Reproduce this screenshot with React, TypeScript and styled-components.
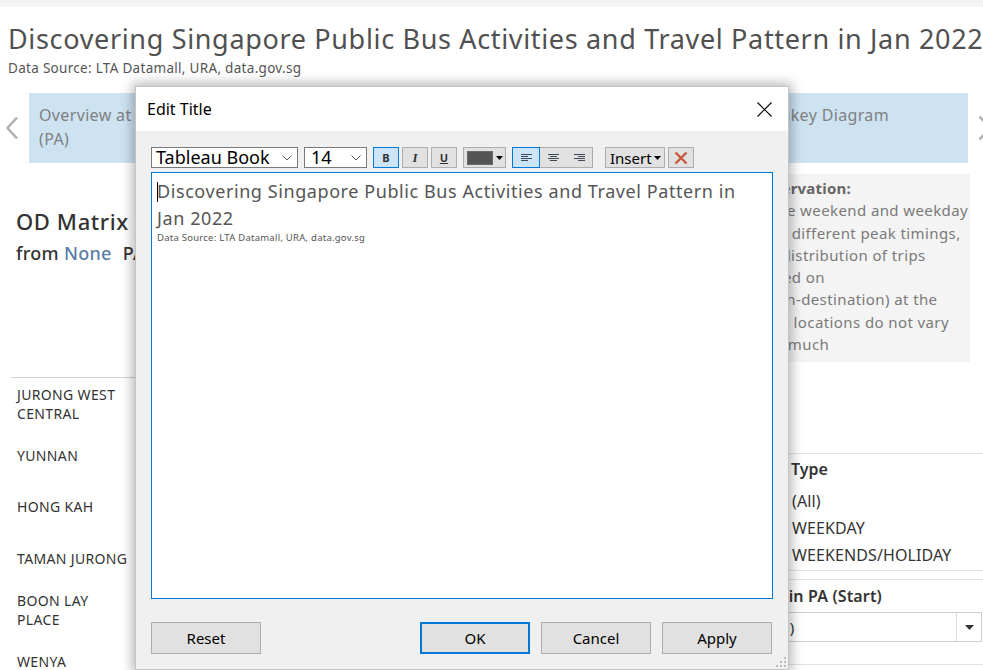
import React from "react";
import styled, { createGlobalStyle } from "styled-components";

const TAB = `"Noto Sans", "Open Sans", sans-serif`;
const WIN = `"Noto Sans", "Open Sans", sans-serif`;

const GlobalStyle = createGlobalStyle`
  * { box-sizing: border-box; }
  html, body { margin: 0; padding: 0; background: #ffffff; }
  body { overflow: hidden; font-family: ${TAB}; }
`;

const Page = styled.div`
  position: relative;
  width: 983px;
  height: 670px;
  overflow: hidden;
  background: #fff;
  font-family: ${TAB};
`;

const TopStrip = styled.div`
  height: 7px;
  background: #f3f3f3;
`;

const Header = styled.header`
  padding: 16px 0 0 8px;
`;

const Title = styled.h1`
  margin: 0;
  font-size: 27px;
  line-height: 32px;
  font-weight: 400;
  letter-spacing: 0.66px;
  color: #505050;
  white-space: nowrap;
`;

const Source = styled.div`
  margin-top: 5px;
  font-size: 13.5px;
  line-height: 16px;
  letter-spacing: 0.3px;
  color: #555;
`;

const StoryNav = styled.nav`
  margin-top: 17px;
  display: grid;
  grid-template-columns: 29px 939px 1fr;
  height: 70px;
`;

const NavArrow = styled.div<{ $side: "left" | "right" }>`
  display: flex;
  align-items: center;
  padding-left: ${(p) => (p.$side === "left" ? 5 : 10)}px;
`;

const StoryBar = styled.div`
  display: grid;
  grid-template-columns: repeat(3, 1fr) 216px;
  background: #cde3f2;
`;

const StoryPoint = styled.div`
  padding: 10px 10px 0;
  font-size: 16px;
  line-height: 24px;
  letter-spacing: 0.35px;
  color: #808080;
  overflow: hidden;
  white-space: nowrap;
`;

const Main = styled.main`
  display: grid;
  grid-template-columns: 150px 1fr 239px;
`;

const LeftCol = styled.section`
  padding-top: 44px;
  white-space: nowrap;
`;

const SheetTitle = styled.h2`
  margin: 0 0 0 16px;
  font-size: 22px;
  line-height: 28px;
  font-weight: 500;
  letter-spacing: 0.6px;
  color: #333;
`;

const SheetSub = styled.div`
  margin: 6px 0 0 16px;
  font-size: 18px;
  line-height: 24px;
  font-weight: 500;
  letter-spacing: 0.3px;
  color: #333;
`;

const Accent = styled.span`
  color: #5a7ea6;
  margin-right: 11px;
`;

const RowList = styled.div`
  margin: 112px 0 0 11px;
  width: 260px;
  border-top: 1px solid #d0d0d0;
`;

const RowLabel = styled.div`
  height: 51.5px;
  display: flex;
  align-items: center;
  padding-left: 6px;
  font-size: 14px;
  line-height: 19px;
  letter-spacing: 0.35px;
  color: #333;
  span {
    width: 114px;
    white-space: normal;
  }
`;

const RightCol = styled.aside`
  display: flex;
  flex-direction: column;
`;

const ObsBox = styled.div`
  margin: 11px 13px 0 0;
  height: 188px;
  background: #f4f4f4;
  padding: 3px 0 0 8px;
  font-size: 15px;
  line-height: 22.3px;
  letter-spacing: 0.4px;
  color: #7a7a7a;
  white-space: nowrap;
  overflow: hidden;
  b {
    font-weight: 700;
    color: #666;
    letter-spacing: 0.2px;
  }
`;

const Filter = styled.div<{ $top: number; $bottom: number }>`
  margin-top: ${(p) => p.$top}px;
  border-top: 1px solid #e3e3e3;
  border-bottom: 1px solid #e3e3e3;
  padding-bottom: ${(p) => p.$bottom}px;
`;

const FilterTitle = styled.div<{ $pad: number; $indent: number; $track: number }>`
  padding: ${(p) => p.$pad}px 0 0 ${(p) => p.$indent}px;
  font-size: 16px;
  line-height: 22px;
  font-weight: 600;
  letter-spacing: ${(p) => p.$track}px;
  color: #333;
  white-space: nowrap;
`;

const RadioList = styled.div`
  margin-top: 7px;
`;

const RadioItem = styled.div`
  height: 27px;
  display: flex;
  align-items: center;
  padding-left: 13px;
  font-size: 16px;
  letter-spacing: 0.1px;
  color: #333;
  white-space: nowrap;
`;

const Radio = styled.span<{ $on?: boolean }>`
  width: 13px;
  height: 13px;
  border-radius: 50%;
  border: 1px solid #999;
  margin-right: 22px;
  background: ${(p) => (p.$on ? "radial-gradient(#555 35%, #fff 40%)" : "#fff")};
`;

const Dropdown = styled.div`
  margin: 5px 1px 0 13px;
  height: 30px;
  border: 1px solid #cfcfcf;
  display: grid;
  grid-template-columns: 1fr 25px;
  font-size: 15px;
  color: #333;
`;

const DropValue = styled.div`
  display: flex;
  align-items: center;
  padding-left: 10px;
`;

const DropArrow = styled.div`
  border-left: 1px solid #dcdcdc;
  display: flex;
  align-items: center;
  justify-content: center;
`;

/* ---------- dialog ---------- */

const Dialog = styled.div`
  position: absolute;
  left: 135px;
  top: 86px;
  width: 654px;
  height: 584px;
  border: 1px solid #c4c4c4;
  background: #f0f0f0;
  box-shadow: 0 0 11px 3px rgba(0, 0, 0, 0.28);
  font-family: ${WIN};
  display: flex;
  flex-direction: column;
`;

const DialogHeader = styled.div`
  height: 44px;
  background: #fff;
  display: flex;
  align-items: center;
  justify-content: space-between;
  padding: 0 16px 0 11px;
`;

const DialogTitle = styled.div`
  font-size: 16px;
  line-height: 22px;
  color: #000;
`;

const CloseBtn = styled.div`
  width: 15px;
  height: 15px;
  display: flex;
`;

const DialogBody = styled.div`
  flex: 1;
  padding: 16px 15px 0 15px;
  display: flex;
  flex-direction: column;
  position: relative;
`;

const Toolbar = styled.div`
  display: flex;
  height: 21px;
`;

const SelectBox = styled.div<{ $w: number; $gap: number; $padLeft: number }>`
  width: ${(p) => p.$w}px;
  margin-left: ${(p) => p.$gap}px;
  display: flex;
  align-items: center;
  justify-content: space-between;
  background: #fff;
  border: 1px solid #7a7a7a;
  padding: 0 5px 0 ${(p) => p.$padLeft}px;
  font-size: 18px;
  line-height: 19px;
  color: #000;
  overflow: hidden;
  white-space: nowrap;
`;

const ToolBtn = styled.div<{ $w: number; $gap: number; $active?: boolean }>`
  width: ${(p) => p.$w}px;
  margin-left: ${(p) => p.$gap}px;
  display: flex;
  align-items: center;
  justify-content: center;
  background: ${(p) => (p.$active ? "#cce4f7" : "#e1e1e1")};
  border: 1px solid ${(p) => (p.$active ? "#0078d7" : "#adadad")};
  color: #333;
  font-size: 11px;
`;

const BoldGlyph = styled.span`
  font-weight: 700;
  font-size: 11px;
`;

const ItalicGlyph = styled.span`
  font-family: "Liberation Serif", serif;
  font-style: italic;
  font-weight: 700;
  font-size: 13px;
`;

const UnderGlyph = styled.span`
  font-weight: 700;
  font-size: 11px;
  text-decoration: underline;
`;

const Swatch = styled.span`
  width: 26px;
  height: 14px;
  background: #555;
  border: 1px solid #6a6a6a;
  margin-right: 3px;
`;

const AlignGroup = styled.div`
  width: 81px;
  margin-left: 6px;
  display: flex;
  border: 1px solid #adadad;
  background: #e1e1e1;
`;

const AlignSeg = styled.div<{ $active?: boolean }>`
  flex: 1;
  display: flex;
  align-items: center;
  justify-content: center;
  margin: ${(p) => (p.$active ? "-1px 0 -1px -1px" : "0")};
  border: ${(p) => (p.$active ? "1px solid #0078d7" : "none")};
  background: ${(p) => (p.$active ? "#cce4f7" : "transparent")};
`;

const InsertBtn = styled(ToolBtn)`
  justify-content: flex-start;
  padding-left: 4px;
  font-size: 15px;
  color: #000;
  gap: 2px;
`;

const TextArea = styled.div`
  margin-top: 4px;
  width: 622px;
  height: 427px;
  border: 1px solid #0078d7;
  background: #fff;
  padding: 5px 5px 0 5px;
  color: #555;
  font-family: ${TAB};
`;

const EditTitle = styled.div`
  font-size: 18px;
  line-height: 27px;
  letter-spacing: 0.58px;
`;

const Caret = styled.span`
  display: inline-block;
  width: 1px;
  height: 20px;
  background: #000;
  vertical-align: -4px;
  margin-right: -1px;
`;

const EditSource = styled.div`
  font-size: 9.5px;
  line-height: 12px;
  letter-spacing: 0.25px;
`;

const ButtonRow = styled.div`
  margin-top: 23px;
  display: flex;
  gap: 11px;
  width: 621px;
`;

const DlgButton = styled.div<{ $primary?: boolean; $push?: boolean }>`
  width: 110px;
  height: 32px;
  display: flex;
  align-items: center;
  justify-content: center;
  background: #e1e1e1;
  border: ${(p) => (p.$primary ? "2px solid #0078d7" : "1px solid #adadad")};
  margin-left: ${(p) => (p.$push ? "auto" : "0")};
  font-size: 15px;
  color: #000;
`;

const Grip = styled.div`
  position: absolute;
  right: 1px;
  bottom: 1px;
  width: 12px;
  height: 12px;
  display: flex;
`;

/* ---------- icons ---------- */

const ChevronLeft = () => (
  <svg width="14" height="24" viewBox="0 0 14 24">
    <path d="M12 1.5 L2.5 12 L12 22.5" fill="none" stroke="#b3b3b3" strokeWidth="2.6" />
  </svg>
);

const ChevronRight = () => (
  <svg width="14" height="26" viewBox="0 0 14 26">
    <path d="M1.5 1.5 L12 13 L1.5 24.5" fill="none" stroke="#b3b3b3" strokeWidth="2.6" />
  </svg>
);

const SmallChevron = () => (
  <svg width="10" height="6" viewBox="0 0 10 6">
    <path d="M0.5 0.5 L5 5 L9.5 0.5" fill="none" stroke="#606060" strokeWidth="1" />
  </svg>
);

const TriDown = ({ color = "#000" }: { color?: string }) => (
  <svg width="7" height="4" viewBox="0 0 7 4">
    <path d="M0 0 H7 L3.5 4 Z" fill={color} />
  </svg>
);

const AlignIcon = ({ mode }: { mode: "left" | "center" | "right" }) => {
  const rows = [11, 7, 11, 7];
  return (
    <svg width="11" height="8" viewBox="0 0 11 8">
      {rows.map((w, i) => {
        const x = mode === "left" ? 0 : mode === "center" ? (11 - w) / 2 : 11 - w;
        return <rect key={i} x={x} y={i * 2} width={w} height="1" fill="#3e4a58" />;
      })}
    </svg>
  );
};

const CloseIcon = () => (
  <svg width="15" height="15" viewBox="0 0 15 15">
    <path d="M0.5 0.5 L14.5 14.5 M14.5 0.5 L0.5 14.5" stroke="#000" strokeWidth="1.1" />
  </svg>
);

const DeleteIcon = () => (
  <svg width="14" height="14" viewBox="0 0 14 14">
    <path d="M1.5 1.5 L12.5 12.5 M12.5 1.5 L1.5 12.5" stroke="#c9583f" strokeWidth="2.4" />
  </svg>
);

const GripIcon = () => (
  <svg width="12" height="12" viewBox="0 0 12 12">
    {[
      [9, 1],
      [5, 5],
      [9, 5],
      [1, 9],
      [5, 9],
      [9, 9],
    ].map(([x, y], i) => (
      <rect key={i} x={x} y={y} width="2" height="2" fill="#bdbdbd" />
    ))}
  </svg>
);

const rows = [
  "JURONG WEST CENTRAL",
  "YUNNAN",
  "HONG KAH",
  "TAMAN JURONG",
  "BOON LAY PLACE",
  "WENYA",
];

export default function App() {
  return (
    <>
      <GlobalStyle />
      <Page>
        <TopStrip />
        <Header>
          <Title>Discovering Singapore Public Bus Activities and Travel Pattern in Jan 2022</Title>
          <Source>Data Source: LTA Datamall, URA, data.gov.sg</Source>
        </Header>

        <StoryNav>
          <NavArrow $side="left">
            <ChevronLeft />
          </NavArrow>
          <StoryBar>
            <StoryPoint>
              Overview at Planning Area
              <br />
              (PA)
            </StoryPoint>
            <StoryPoint>Origin-Destination Matrix</StoryPoint>
            <StoryPoint>Trips by Hour</StoryPoint>
            <StoryPoint>Sankey Diagram</StoryPoint>
          </StoryBar>
          <NavArrow $side="right">
            <ChevronRight />
          </NavArrow>
        </StoryNav>

        <Main>
          <LeftCol>
            <SheetTitle>OD Matrix of Trips</SheetTitle>
            <SheetSub>
              from <Accent>None</Accent>PA to All PA
            </SheetSub>
            <RowList>
              {rows.map((r) => (
                <RowLabel key={r}>
                  <span>{r}</span>
                </RowLabel>
              ))}
            </RowList>
          </LeftCol>

          <div />

          <RightCol>
            <ObsBox>
              <b>Observation:</b>
              <br />
              In the weekend and weekday
              <br />
              have different peak timings,
              <br />
              but distribution of trips
              <br />
              (based on
              <br />
              origin-destination) at the
              <br />
              most locations do not vary
              <br />
              very much
            </ObsBox>

            <Filter $top={91} $bottom={2}>
              <FilterTitle $pad={4} $indent={13} $track={0}>
                Day Type
              </FilterTitle>
              <RadioList>
                <RadioItem>
                  <Radio $on />
                  (All)
                </RadioItem>
                <RadioItem>
                  <Radio />
                  WEEKDAY
                </RadioItem>
                <RadioItem>
                  <Radio />
                  WEEKENDS/HOLIDAY
                </RadioItem>
              </RadioList>
            </Filter>

            <Filter $top={8} $bottom={22}>
              <FilterTitle $pad={5} $indent={10} $track={0.15}>
                Origin PA (Start)
              </FilterTitle>
              <Dropdown>
                <DropValue>(All)</DropValue>
                <DropArrow>
                  <svg width="9" height="5" viewBox="0 0 9 5">
                    <path d="M0 0 H9 L4.5 5 Z" fill="#333" />
                  </svg>
                </DropArrow>
              </Dropdown>
            </Filter>
          </RightCol>
        </Main>

        <Dialog>
          <DialogHeader>
            <DialogTitle>Edit Title</DialogTitle>
            <CloseBtn>
              <CloseIcon />
            </CloseBtn>
          </DialogHeader>
          <DialogBody>
            <Toolbar>
              <SelectBox $w={147} $gap={0} $padLeft={4}>
                Tableau Book
                <SmallChevron />
              </SelectBox>
              <SelectBox $w={63} $gap={6} $padLeft={6}>
                14
                <SmallChevron />
              </SelectBox>
              <ToolBtn $w={26} $gap={6} $active>
                <BoldGlyph>B</BoldGlyph>
              </ToolBtn>
              <ToolBtn $w={26} $gap={3}>
                <ItalicGlyph>I</ItalicGlyph>
              </ToolBtn>
              <ToolBtn $w={26} $gap={3}>
                <UnderGlyph>U</UnderGlyph>
              </ToolBtn>
              <ToolBtn $w={43} $gap={6}>
                <Swatch />
                <TriDown />
              </ToolBtn>
              <AlignGroup>
                <AlignSeg $active>
                  <AlignIcon mode="left" />
                </AlignSeg>
                <AlignSeg>
                  <AlignIcon mode="center" />
                </AlignSeg>
                <AlignSeg>
                  <AlignIcon mode="right" />
                </AlignSeg>
              </AlignGroup>
              <InsertBtn $w={60} $gap={12}>
                Insert
                <TriDown />
              </InsertBtn>
              <ToolBtn $w={26} $gap={3}>
                <DeleteIcon />
              </ToolBtn>
            </Toolbar>

            <TextArea>
              <EditTitle>
                <Caret />
                Discovering Singapore Public Bus Activities and Travel Pattern in Jan 2022
              </EditTitle>
              <EditSource>Data Source: LTA Datamall, URA, data.gov.sg</EditSource>
            </TextArea>

            <ButtonRow>
              <DlgButton>Reset</DlgButton>
              <DlgButton $primary $push>
                OK
              </DlgButton>
              <DlgButton>Cancel</DlgButton>
              <DlgButton>Apply</DlgButton>
            </ButtonRow>

            <Grip>
              <GripIcon />
            </Grip>
          </DialogBody>
        </Dialog>
      </Page>
    </>
  );
}
